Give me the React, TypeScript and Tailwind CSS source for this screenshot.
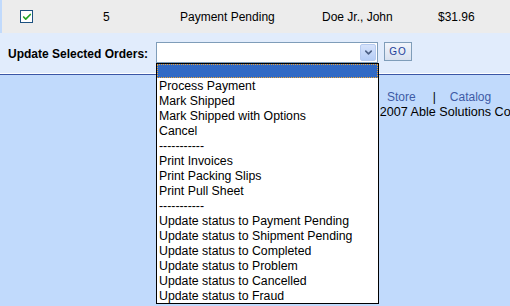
import { Check, ChevronDown } from "lucide-react";

const options = [
  "",
  "Process Payment",
  "Mark Shipped",
  "Mark Shipped with Options",
  "Cancel",
  "-----------",
  "Print Invoices",
  "Print Packing Slips",
  "Print Pull Sheet",
  "-----------",
  "Update status to Payment Pending",
  "Update status to Shipment Pending",
  "Update status to Completed",
  "Update status to Problem",
  "Update status to Cancelled",
  "Update status to Fraud",
];

export default function App() {
  return (
    <div className="relative w-[510px] h-[306px] overflow-hidden bg-[#c1dafc] font-['Liberation_Sans',Arial,sans-serif] text-black">
      {/* order row */}
      <div className="ml-[2px] h-[33px] bg-[#ececec] flex items-center text-[12px]">
        <div className="w-[18px]" />
        <div className="w-[13px] h-[13px] border border-[#1c5180] bg-white flex items-center justify-center">
          <Check className="w-[10px] h-[10px] text-[#21a121]" strokeWidth={4} />
        </div>
        <div className="w-[70px]" />
        <span className="w-[77px]">5</span>
        <span className="w-[142px]">Payment Pending</span>
        <span className="w-[116px]">Doe Jr., John</span>
        <span>$31.96</span>
      </div>

      {/* update selected orders */}
      <div className="h-[40px] bg-[#e1ecfc] flex items-start pt-[9px]">
        <span className="ml-[8px] w-[148px] mt-[3px] text-[12px] font-bold">Update Selected Orders:</span>
        <div className="w-[222px] h-[21px] border border-[#7f9db9] bg-white flex justify-end items-center pr-[1px]">
          <div className="w-[16px] h-[17px] rounded-[2px] bg-gradient-to-b from-[#d6e3fb] to-[#b5cdf6] border border-[#b6cbf0] flex items-center justify-center">
            <ChevronDown className="w-[11px] h-[11px] text-[#4d6185]" strokeWidth={3.5} />
          </div>
        </div>
        <button className="ml-[6px] w-[28px] h-[19px] border border-[#7f9db9] bg-gradient-to-b from-[#f2f5fb] to-[#d8e1ef] text-[10px] text-[#1d3e9a] tracking-[1px] leading-none">
          GO
        </button>
      </div>
      <div className="h-px bg-white" />
      <div className="h-px bg-[#3b57a6]" />

      {/* footer */}
      <div className="pt-[15px] text-[12px] leading-[15px]">
        <div className="flex ml-[387px] text-[#3e5ba6] whitespace-nowrap">
          <span>Store</span>
          <span className="ml-[17px] text-black">|</span>
          <span className="ml-[14px]">Catalog</span>
        </div>
        <div className="ml-[367px] text-[12.6px] whitespace-nowrap">© 2007 Able Solutions Corporation</div>
      </div>

      {/* open select list */}
      <div className="absolute left-[156px] top-[63px] w-[223px] border border-black bg-white text-[12.3px]">
        {options.map((o, i) => (
          <div
            key={i}
            className={
              i === 0
                ? "h-[14px] bg-[#316ac5] border border-dotted border-[#e9a33a]"
                : "h-[15px] pt-px leading-[14px] pl-[2px] whitespace-nowrap"
            }
          >
            {o}
          </div>
        ))}
      </div>
    </div>
  );
}
